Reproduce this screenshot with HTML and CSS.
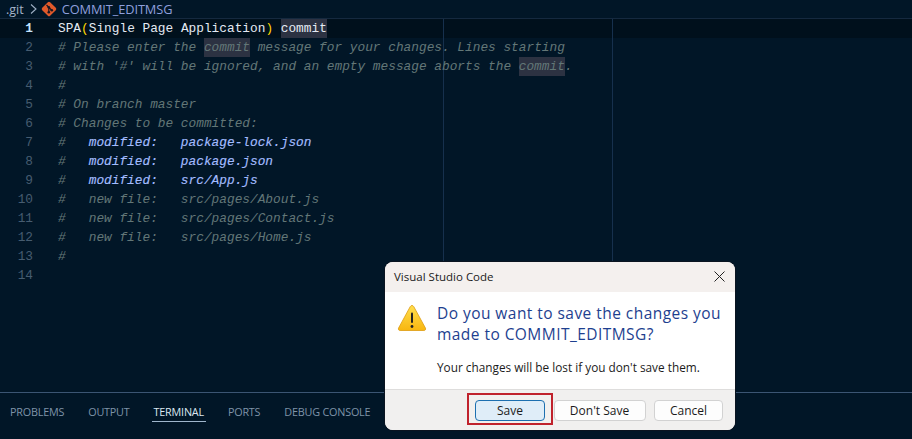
FILE: index.html
```html
<!DOCTYPE html>
<html lang="en">
<head>
<meta charset="utf-8">
<title>COMMIT_EDITMSG</title>
<link rel="stylesheet" href="styles.css">
</head>
<body>
<div class="app">
  <nav class="crumbs">
    <span class="crumb">.git</span>
    <svg class="chev" width="9" height="12" viewBox="0 0 9 12"><path d="M2 1.500 7 6l-5 4.500" fill="none" stroke="#9fb0c4" stroke-width="1.100"/></svg>
    <svg class="git-icon" width="16" height="16" viewBox="0 0 16 16"><rect x="2.400" y="2.400" width="11.200" height="11.200" rx="1.600" transform="rotate(45 8 8)" fill="#e0592a"/><path d="M5.500 4 11 9.500M7.800 6.300V11.500" stroke="#1a1622" stroke-width="1.200" fill="none"/><circle cx="7.800" cy="6.200" r="1.300" fill="#1a1622"/><circle cx="7.800" cy="11.300" r="1.300" fill="#1a1622"/><circle cx="10.800" cy="9.200" r="1.300" fill="#1a1622"/></svg>
    <span class="crumb-file">COMMIT_EDITMSG</span>
  </nav>
  <main class="editor">
    <div class="ruler ruler-a"></div>
    <div class="ruler ruler-b"></div>
    <div class="line current"><span class="num">1</span><code class="text title">SPA<span class="bracket">(</span>Single Page Application<span class="bracket">)</span> <span class="hl">commit</span></code></div>
    <div class="line"><span class="num">2</span><code class="text cm"># Please enter the <span class="hl">commit</span> message for your changes. Lines starting</code></div>
    <div class="line"><span class="num">3</span><code class="text cm"># with '#' will be ignored, and an empty message aborts the <span class="hl">commit</span>.</code></div>
    <div class="line"><span class="num">4</span><code class="text cm">#</code></div>
    <div class="line"><span class="num">5</span><code class="text cm"># On branch master</code></div>
    <div class="line"><span class="num">6</span><code class="text cm"># Changes to be committed:</code></div>
    <div class="line"><span class="num">7</span><code class="text cm">#   <span class="mod">modified:   package-lock.json</span></code></div>
    <div class="line"><span class="num">8</span><code class="text cm">#   <span class="mod">modified:   package.json</span></code></div>
    <div class="line"><span class="num">9</span><code class="text cm">#   <span class="mod">modified:   src/App.js</span></code></div>
    <div class="line"><span class="num">10</span><code class="text cm">#   new file:   src/pages/About.js</code></div>
    <div class="line"><span class="num">11</span><code class="text cm">#   new file:   src/pages/Contact.js</code></div>
    <div class="line"><span class="num">12</span><code class="text cm">#   new file:   src/pages/Home.js</code></div>
    <div class="line"><span class="num">13</span><code class="text cm">#</code></div>
    <div class="line"><span class="num">14</span><code class="text cm"></code></div>
  </main>
  <footer class="panel">
    <span class="tab">PROBLEMS</span>
    <span class="tab">OUTPUT</span>
    <span class="tab active">TERMINAL</span>
    <span class="tab">PORTS</span>
    <span class="tab">DEBUG CONSOLE</span>
  </footer>
</div>
<section class="dialog">
  <header class="dlg-title">
    <span>Visual Studio Code</span>
    <svg width="11" height="11" viewBox="0 0 11 11"><path d="M.5.5l10 10M10.500.5l-10 10" stroke="#222" stroke-width="1" fill="none"/></svg>
  </header>
  <div class="dlg-body">
    <svg class="warn" width="30" height="30" viewBox="0 0 30 30">
      <defs><linearGradient id="w" x1="0" y1="0" x2="0" y2="1"><stop offset="0" stop-color="#ffdf4f"/><stop offset="1" stop-color="#f8b60f"/></linearGradient></defs>
      <path d="M15 2.500c.8 0 1.300.4 1.800 1.200L28.400 25c.7 1.400-.1 2.500-1.500 2.500H3.100c-1.400 0-2.200-1.100-1.500-2.500L13.200 3.700c.5-.8 1-1.200 1.800-1.200z" fill="url(#w)" stroke="#dd9a10" stroke-width=".8"/>
      <rect x="14" y="9.500" width="2" height="10.500" rx="1" fill="#222"/>
      <circle cx="15" cy="23.500" r="1.400" fill="#222"/>
    </svg>
    <div class="dlg-copy">
      <h1>Do you want to save the changes you made to COMMIT_EDITMSG?</h1>
      <p>Your changes will be lost if you don't save them.</p>
    </div>
  </div>
  <div class="dlg-actions">
    <button class="btn primary">Save</button>
    <button class="btn wide">Don't Save</button>
    <button class="btn">Cancel</button>
  </div>
  <div class="callout"></div>
</section>
</body>
</html>
```
FILE: styles.css
```css
* { box-sizing: border-box; }
html, body { margin: 0; height: 100%; overflow: hidden; }
body { background: #011627; font-family: "Open Sans", "Liberation Sans", sans-serif; }
.app { display: flex; flex-direction: column; height: 439px; }

.crumbs { display: flex; align-items: center; height: 19px; padding-left: 6px; border-bottom: 1px solid #15293f; font-size: 12.500px; color: #a4b3c7; }
.chev { margin: 0 3px 0 5px; }
.git-icon { margin-right: 5px; }
.crumb-file { color: #8f9fdc; font-size: 12.800px; letter-spacing: -.1px; }

.editor { position: relative; flex: 1; }
.ruler { position: absolute; top: 0; bottom: 0; width: 1px; background: #16304d; }
.ruler-a { left: 443px; }
.ruler-b { left: 612px; }

.line { display: flex; height: 19px; line-height: 19px; font-family: "Liberation Mono", "DejaVu Sans Mono", monospace; font-size: 12.800px; }
.line.current { background: #00101c; }
.num { width: 33px; text-align: right; color: #465c70; flex: none; }
.current .num { color: #c5e4fd; font-weight: 700; }
.text { margin-left: 25px; font-family: inherit; font-size: inherit; white-space: pre; position: relative; }
.title { color: #e4eaf3; }
.bracket { color: #ffd700; }
.cm { color: #637777; font-style: italic; }
.mod { color: #a3bcff; -webkit-text-stroke: .15px #a3bcff; }
.hl { background: #2c3242; display: inline-block; }

.panel { display: flex; height: 47px; padding: 0 0 0 10px; gap: 24px; border-top: 1px solid #3b5573; font-size: 10.800px; color: #7e93a8; }
.tab { height: 22px; margin-top: 11px; line-height: 15px; position: relative; letter-spacing: -.2px; }
.tab.active { color: #dbe6f0; }
.tab.active::after { content: ""; position: absolute; left: -2px; right: -2px; bottom: 4px; height: 1px; background: #9fb6cc; }

.dialog { position: absolute; left: 385px; top: 262px; width: 350px; height: 168px; background: #fff; border-radius: 8px; display: flex; flex-direction: column; box-shadow: 0 0 0 1px #0a1420; color: #1b1b1b; }
.dlg-title { display: flex; justify-content: space-between; align-items: center; height: 30px; padding: 0 10px 2px 9px; background: #f4f0ee; border-radius: 8px 8px 0 0; font-size: 11.500px; }
.dlg-body { display: flex; flex: 1; padding: 11px 10px 0 12px; gap: 10px; }
.warn { flex: none; }
.dlg-copy { min-width: 0; }
h1 { margin: 0; font-size: 15.500px; font-weight: 400; line-height: 21px; color: #1e3f8f; letter-spacing: .45px; }
p { margin: 14px 0 0; font-size: 11.800px; line-height: 16px; }
.dlg-actions { display: flex; justify-content: flex-end; gap: 8.500px; align-items: center; height: 41px; padding: 0 12px 0 0; background: #f1f0ef; border-top: 1px solid #dedddc; border-radius: 0 0 8px 8px; }
.btn { width: 69px; height: 21px; padding: 0; font: inherit; font-size: 12px; color: #1b1b1b; background: #fdfdfd; border: 1px solid #d2d2d2; border-radius: 4px; }
.btn.wide { width: 92px; }
.btn.primary { width: 70px; background: #dfedf8; border-color: #1c6fb0; }
.callout { position: absolute; left: 82px; top: 131px; width: 86px; height: 32px; border: 2px solid #c0222c; pointer-events: none; }
```
